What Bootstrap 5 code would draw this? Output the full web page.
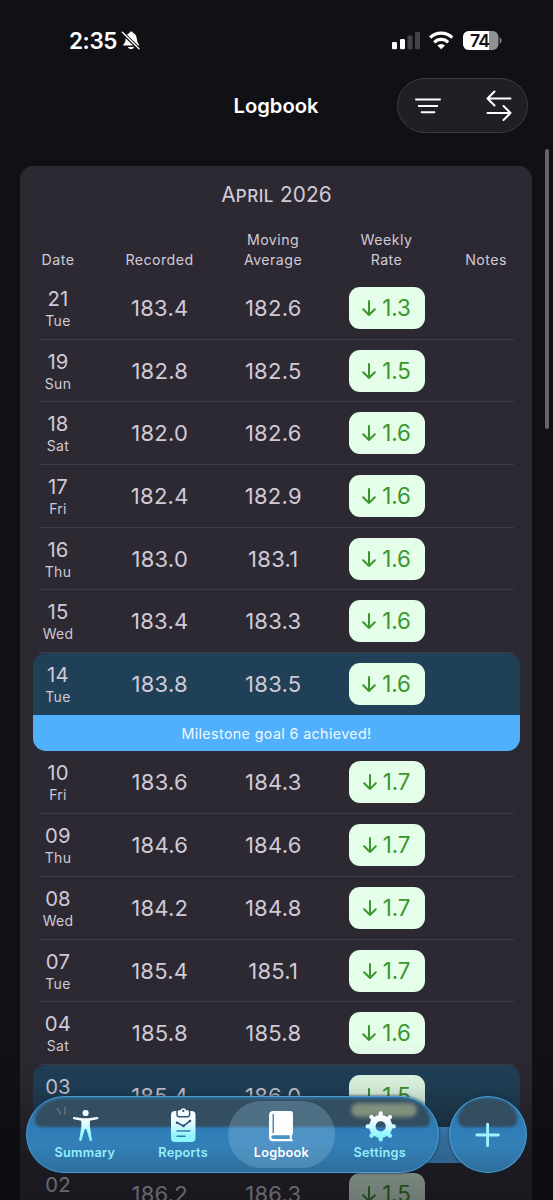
<!DOCTYPE html>
<html lang="en" data-bs-theme="dark">
<head>
<meta charset="utf-8">
<meta name="viewport" content="width=device-width, initial-scale=1">
<title>Logbook</title>
<link href="https://cdn.jsdelivr.net/npm/bootstrap@5.3.0/dist/css/bootstrap.min.css" rel="stylesheet">
<style>
body{background:#111014;color:#cfcad6;font-family:Inter,"Liberation Sans",sans-serif;line-height:20px}
.phone{width:553px;height:1200px}
.status{height:62px;padding:20px 51px 0 69px;color:#fff}
.clock{font-size:22.5px;font-weight:600;letter-spacing:-.4px;line-height:42px}
.topbar{height:104px;padding:16px 25px 0 0}
.topbar h1{font-size:20.2px;font-weight:600;color:#fff;left:0;right:0;top:34px;line-height:20px;letter-spacing:0;text-indent:-1px}
.tools{width:131px;height:55px;border:1.3px solid #3d3b41;background:#201f23;padding:0 13px 0 16px}
.sheet{margin:0 21px 0 20px;height:1100px;background:#2d2933;border-radius:13px 13px 0 0;padding:0 12px 0 13px}
.month{font-size:20.8px;letter-spacing:.1px;line-height:24px;padding-top:16.5px;height:64px}
.month span{font-size:17px;font-weight:500;letter-spacing:.5px}
.cols{display:grid;grid-template-columns:50px 153px 74px 153px 46px}
.heads{font-size:14.2px;letter-spacing:.45px;height:46.5px;align-items:end;padding-bottom:9px}
.heads>div{white-space:nowrap;margin:0 -8px}
.entry{height:62.7px;align-items:center;position:relative}
.entry::after{content:"";position:absolute;left:6px;right:6px;bottom:-.5px;height:1px;background:#403c45}
.goal .entry::after{display:none}
.num{font-size:22px;letter-spacing:.25px;line-height:26px;padding-left:.5px}
.day{font-size:20.3px;line-height:23px;letter-spacing:.2px;padding-top:3px}
.dow{font-size:14px;line-height:22px;letter-spacing:.3px}
.rate{width:76px;height:42px;border-radius:11px;background:#e5fee9;color:#3a962d;font-size:22.3px;letter-spacing:-.1px}
.goal{border-radius:13px;background:#204058;overflow:hidden}
.banner{height:36.3px;background:#50b0fb;color:#f1f9ff;font-size:14.2px;letter-spacing:.42px;line-height:37px}
.goal .entry{height:62.2px}
.thumb{left:545px;top:149px;width:4px;height:280px;background:#66656a;border-radius:2px}
.shade{left:0;right:0;top:1040px;height:160px;background:linear-gradient(rgba(10,10,14,0),rgba(10,10,14,.08) 28%,rgba(10,10,14,.4) 60%,rgba(10,10,14,.55))}
.glass{top:1096px;height:77px;border:1.5px solid #4aa0d6;background:linear-gradient(#316b95,#2f7db7 40%,#3380b9 62%,#2e6e9c);overflow:hidden;box-shadow:0 0 3px #102c44}
.glass::before{content:"";position:absolute;left:8px;right:9px;top:2px;height:28px;background:#334d61;border-radius:31px 31px 8px 8px/25px 25px 6px 6px;filter:blur(1.2px)}
.tabs{left:26px;width:413px;border-radius:39px}
.tabs::before{right:8px}
.plus{left:449px;width:78px;border-radius:50%}
.plus::before{border-radius:50% 50% 8px 8px/90% 90% 8px 8px}
.tab{color:#92effc;font-size:12.7px;font-weight:600;letter-spacing:.25px;width:98.3px;height:74px;padding-top:9px;line-height:14px}
.active{color:#fff}
.active::before{content:"";position:absolute;left:-4px;width:107px;top:3.5px;height:67px;border-radius:34px;background:rgba(155,202,232,.27)}
.glow{left:324px;top:6px;width:66px;height:14px;border-radius:8px;background:#80907d;filter:blur(2px)}
.reflect{left:29px;top:10px}
</style>
</head>
<body>
<div class="phone position-relative overflow-hidden">
  <header>
    <div class="status d-flex justify-content-between">
      <div class="d-flex align-items-center">
        <span class="clock">2:35</span>
        <svg width="20" height="22" viewBox="0 0 20 22" style="margin-left:4px"><path d="M2.1 15.5c0-1.4 1.8-2 2.3-4.8.5-4 1.3-7 4.1-7.8.4-2 3.2-2 3.6 0 3.1 1 3.6 4.3 4 7.8.4 2.8 2.2 3.4 2.2 4.8zM7 17h6c-.5 2.8-5.5 2.8-6 0z" fill="#fff"/><path d="M1 2.2 18.4 19.2" stroke="#111014" stroke-width="3.6"/><path d="M1.4 2.3 18 18.8" stroke="#fff" stroke-width="1.4" stroke-linecap="round"/></svg>
      </div>
      <svg width="112" height="42" viewBox="390 20 112 42"><g><rect x="392" y="42" width="5" height="7.2" rx="1.3" fill="#fff"/><rect x="400" y="39" width="5" height="10.2" rx="1.3" fill="#fff"/><rect x="407.5" y="35.5" width="5" height="13.7" rx="1.3" fill="#444347"/><rect x="415" y="31.7" width="5" height="17.5" rx="1.3" fill="#444347"/></g><g fill="none" stroke="#fff" stroke-width="3.2"><path d="M430.2 37.7a15.5 15.5 0 0 1 22 0"/><path d="M434.3 42.3a9.7 9.7 0 0 1 13.8 0"/></g><path d="m441.2 49.3-3.8-3.8a5.5 5.5 0 0 1 7.6 0z" fill="#fff"/><rect x="463" y="31" width="35.5" height="19" rx="6" fill="#929194"/><path d="M469 31h20v19h-20a6 6 0 0 1-6-6v-7a6 6 0 0 1 6-6z" fill="#fff"/><path d="M499.7 37.5c2.6.9 2.6 5.2 0 6z" fill="#858487"/><text x="470" y="46.8" font-size="17.6" font-weight="600" fill="#111014" letter-spacing="-.9" font-family="Inter, sans-serif">74</text></svg>
    </div>
    <div class="topbar position-relative d-flex justify-content-end">
      <h1 class="position-absolute text-center m-0">Logbook</h1>
      <div class="tools rounded-pill d-flex align-items-center justify-content-between position-relative">
        <svg width="28" height="24" viewBox="0 0 28 24" stroke="#fff" stroke-width="2" stroke-linecap="round"><path d="M2 5.5h24M4.8 12h18.4M7.7 18.3h12.6"/></svg>
        <svg width="28" height="34" viewBox="0 0 28 34" fill="none" stroke="#fff" stroke-width="2" stroke-linecap="round" stroke-linejoin="round"><path d="M24.5 9.5H1.5m7-7-7 7 7 7M1.5 24h23m-7-7 7 7-7 7"/></svg>
      </div>
    </div>
  </header>
  <main class="sheet">
    <div class="month text-center">A<span>PRIL</span> 2026</div>
    <div class="cols heads text-center"><div>Date</div><div>Recorded</div><div>Moving<br>Average</div><div>Weekly<br>Rate</div><div>Notes</div></div>
    <div id="log"></div>
  </main>
  <div class="thumb position-absolute"></div>
  <div class="shade position-absolute"></div>
  <nav class="glass tabs position-absolute">
    <div class="glow position-absolute"></div>
    <svg class="reflect position-absolute" width="12" height="10" stroke="#74838f" stroke-width="1.6" fill="none" opacity=".7"><path d="m1 1 4 6M9 0v8"/></svg>
    <div class="d-flex position-relative" style="padding-left:8.7px">
      <div class="tab d-flex flex-column align-items-center position-relative"><svg width="40" height="40" viewBox="0 0 40 40"><defs><linearGradient id="ice" x1="0" y1="0" x2="0" y2="40" gradientUnits="userSpaceOnUse"><stop offset=".35" stop-color="#f5fcff"/><stop offset=".75" stop-color="#8ff5fd"/></linearGradient></defs><g fill="url(#ice)"><circle cx="20.6" cy="7" r="3.1"/><path d="M9.2 11 17.8 12.2h5.6L32 11c1.5-.2 1.8 1.9.4 2.2l-7.5 1.5v6.1l2.1 13c.1 1.5-1.9 1.8-2.4.4L21.3 23h-1.4l-3.3 11.2c-.5 1.4-2.5 1.1-2.4-.4l2.1-13v-6.1l-7.5-1.5c-1.4-.3-1.1-2.4.4-2.2z"/></g></svg><span>Summary</span></div>
      <div class="tab d-flex flex-column align-items-center position-relative"><svg width="40" height="40" viewBox="0 0 40 40"><rect x="8" y="5" width="24.5" height="31" rx="4" fill="url(#ice)"/><path d="M14 4.5v4q0 2.2 2.2 2.2h8.2q2.2 0 2.2-2.2v-4" fill="none" stroke="#30536c" stroke-width="1.4"/><path d="M15.3 4.2h2.2a3 3 0 0 1 5.6 0h2.2v4.6h-10z" fill="#f5fcff"/><circle cx="20.3" cy="4.9" r="1.1" fill="#30536c"/><path d="m14 16.7 6.5 3.3 6.5-5M14 25h13M14 30.3h8" fill="none" stroke="#3380a3" stroke-width="1.4" stroke-linecap="round"/><path d="m14 16.7 6.5 3.3 6.5-5" fill="none" stroke="#30536c" stroke-width="1.4"/><g fill="#30536c"><circle cx="14" cy="16.7" r="1.3"/><circle cx="20.5" cy="19.9" r="1.3"/><circle cx="27" cy="15" r="1.3"/></g></svg><span>Reports</span></div>
      <div class="tab active d-flex flex-column align-items-center position-relative"><svg class="position-relative" width="40" height="40" viewBox="0 0 40 40"><path d="M12.3 5h17q2.7 0 2.7 2.7V27q0 1.4-1.2 2.2v3.9l1 .6q.6 1.6-.8 1.6H11.5q-3.5 0-3.5-4V9.3Q8 5 12.3 5z" fill="#fbfdff"/><path d="M12.2 8v19" stroke="#4a7897" stroke-width="1.3"/><path d="M28.8 29.3H12.3q-2 0-2 1.8t2 1.8h16.5z" fill="#4a94c8"/></svg><span class="position-relative">Logbook</span></div>
      <div class="tab d-flex flex-column align-items-center position-relative"><svg width="40" height="40" viewBox="0 0 40 40"><g transform="translate(20.7 20.4)" fill="none" stroke="url(#gear)"><defs><linearGradient id="gear" x1="0" y1="-15" x2="0" y2="15" gradientUnits="userSpaceOnUse"><stop offset=".3" stop-color="#f5fcff"/><stop offset=".8" stop-color="#8ff5fd"/></linearGradient></defs><circle r="8.3" stroke-width="6.4"/><path d="M-.01-10 0-13.1M7.1-7.1l2.2-2.2M7.1 7.1l2.2 2.2M.01 10 0 13.1M-7.1 7.1l-2.2 2.2M-7.1-7.1l-2.2-2.2" stroke-width="4.2" stroke-linecap="round"/><path d="M10 0h3.1M-10 0h-3.1" stroke="#d2f9fe" stroke-width="4.2" stroke-linecap="round"/></g></svg><span>Settings</span></div>
    </div>
  </nav>
  <div class="glass plus position-absolute d-flex align-items-center justify-content-center"><svg class="position-relative" width="28" height="28" viewBox="0 0 28 28" stroke="#a0f4ff" stroke-width="2.8" stroke-linecap="round"><path d="M13.6 3.2v21.6M2.8 14h21.6"/></svg></div>
</div>
<script src="https://cdn.jsdelivr.net/npm/bootstrap@5.3.0/dist/js/bootstrap.bundle.min.js"></script>
<script>
const rows=[["21","Tue","183.4","182.6","1.3"],["19","Sun","182.8","182.5","1.5"],["18","Sat","182.0","182.6","1.6"],["17","Fri","182.4","182.9","1.6"],["16","Thu","183.0","183.1","1.6"],["15","Wed","183.4","183.3","1.6"],["14","Tue","183.8","183.5","1.6","Milestone goal 6 achieved!"],["10","Fri","183.6","184.3","1.7"],["09","Thu","184.6","184.6","1.7"],["08","Wed","184.2","184.8","1.7"],["07","Tue","185.4","185.1","1.7"],["04","Sat","185.8","185.8","1.6"],["03","","185.4","186.0","1.5"," "],["02","","186.2","186.3","1.5"]];
document.getElementById("log").innerHTML=rows.map(([d,w,r,a,k,g])=>{
  const e=`<div class="cols entry text-center"><div><div class="day">${d}</div><div class="dow">${w||"&nbsp;"}</div></div><div class="num">${r}</div><div class="num">${a}</div><div class="rate d-flex align-items-center justify-content-center mx-auto"><svg width="14" height="18" viewBox="0 0 14 18" fill="none" stroke="currentColor" stroke-width="2" stroke-linecap="round" stroke-linejoin="round" style="margin-right:6px"><path d="M7 2v14M1.2 10.3 7 16l5.8-5.7"/></svg>${k}</div><div></div></div>`;
  return g?`<div class="goal">${e}<div class="banner text-center">${g}</div></div>`:e;
}).join("");
</script>
</body>
</html>
